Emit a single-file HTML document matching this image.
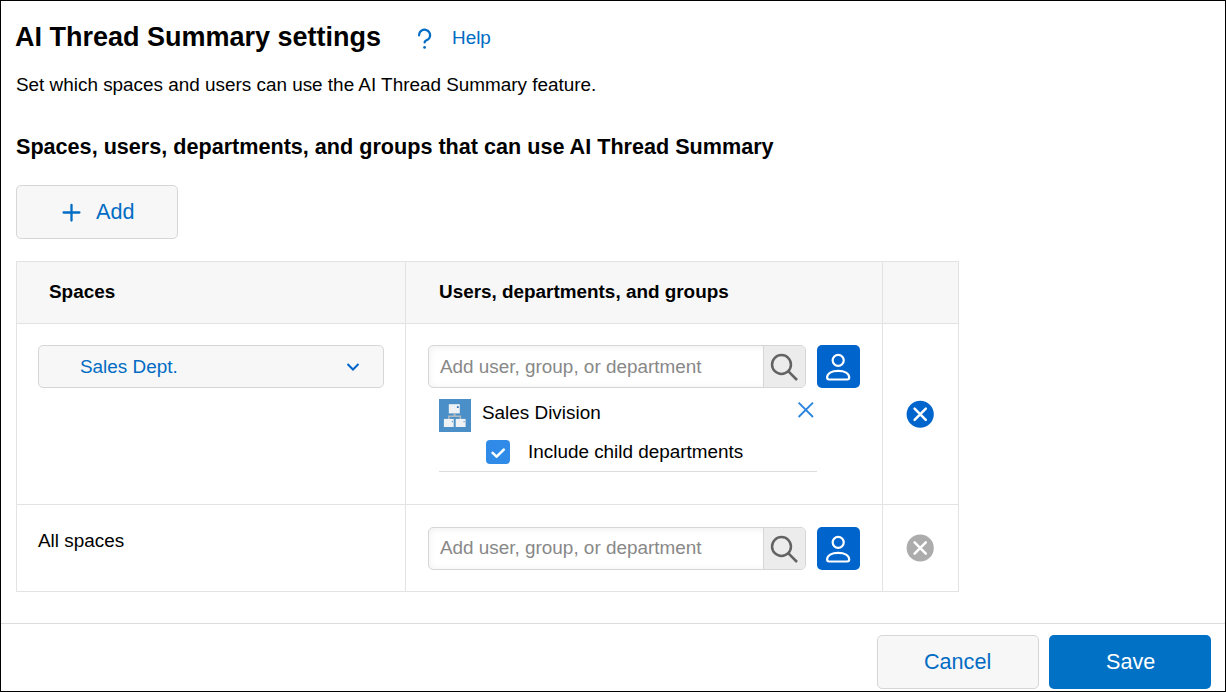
<!DOCTYPE html>
<html><head><meta charset="utf-8">
<style>
*{box-sizing:border-box;margin:0;padding:0}
html,body{width:1226px;height:692px;overflow:hidden;background:#fff}
body{font-family:"Liberation Sans",sans-serif;color:#000;position:relative}
.frame{position:absolute;left:0;top:0;width:1226px;height:692px;border:1px solid #000}
.a{position:absolute;white-space:nowrap;line-height:1}
.title{left:15px;top:24px;font-size:27px;font-weight:bold}
.help{left:452px;top:29px;font-size:18.9px;color:#006cc4}
.desc{left:16px;top:76px;font-size:18.9px;color:#000}
.sect{left:16px;top:136px;font-size:21.6px;font-weight:bold}
.btn{position:absolute;background:#f7f7f7;border:1px solid #d6d6d6;border-radius:5px}
.addbtn{left:16px;top:185px;width:162px;height:54px}
.addtxt{left:96px;top:201px;font-size:21.6px;color:#006cc4}
.table{position:absolute;left:16px;top:261px;width:943px;height:331px;border:1px solid #e3e3e3}
.hdr{position:absolute;left:0;top:0;width:941px;height:62px;background:#f7f7f7;border-bottom:1px solid #e3e3e3}
.vl{position:absolute;top:0;width:1px;height:329px;background:#e3e3e3}
.hl{position:absolute;left:0;width:941px;height:1px;background:#e3e3e3}
.th{font-size:18.9px;font-weight:bold}
.dd{position:absolute;left:38px;top:345px;width:346px;height:43px;background:#f7f7f7;border:1px solid #d6d6d6;border-radius:5px}
.blue{color:#006cc4}
.inp{position:absolute;left:428px;width:378px;height:43px;background:#fff;border:1px solid #d6d6d6;border-radius:5px;overflow:hidden;box-shadow:inset 0 1px 7px rgba(0,0,0,0.07)}
.inp .sb{position:absolute;right:0;top:0;width:42px;height:41px;background:#ececec;border-left:1px solid #d6d6d6}
.ph{font-size:18.9px;color:#888}
.ub{position:absolute;left:817px;width:43px;height:43px;background:#0064cd;border-radius:5px}
.txt{font-size:18.9px}
.footline{position:absolute;left:1px;top:623px;width:1224px;height:1px;background:#dcdcdc}
.cancel{left:877px;top:635px;width:162px;height:54px}
.save{position:absolute;left:1049px;top:635px;width:162px;height:54px;background:#0071c5;border-radius:5px}
.btxt{font-size:21.6px}
</style></head><body>
<div class="frame"></div>

<div class="a title">AI Thread Summary settings</div>
<svg class="a" style="left:410px;top:20px" width="30" height="40" viewBox="0 0 30 40"><path d="M9.1 15.4 A5.5 5.5 0 1 1 18.3 19.3 Q14.6 21 14.6 22.4" fill="none" stroke="#006cc4" stroke-width="2.2" stroke-linecap="round"/><circle cx="14.6" cy="27.4" r="1.4" fill="#006cc4"/></svg>
<div class="a help">Help</div>
<div class="a desc">Set which spaces and users can use the AI Thread Summary feature.</div>
<div class="a sect">Spaces, users, departments, and groups that can use AI Thread Summary</div>

<div class="btn addbtn"></div>
<svg class="a" style="left:62px;top:203px" width="19" height="19" viewBox="0 0 19 19"><path d="M9.5 2V17.6M1.6 9.5H17.4" stroke="#006cc4" stroke-width="2.3" stroke-linecap="round"/></svg>
<div class="a addtxt">Add</div>

<div class="table">
  <div class="hdr"></div>
  <div class="vl" style="left:388px"></div>
  <div class="vl" style="left:865px"></div>
  <div class="hl" style="top:242px"></div>
</div>
<div class="a th" style="left:49px;top:283px">Spaces</div>
<div class="a th" style="left:439px;top:283px">Users, departments, and groups</div>

<div class="dd"></div>
<div class="a txt blue" style="left:80px;top:358px">Sales Dept.</div>
<svg class="a" style="left:346px;top:362px" width="14" height="10" viewBox="0 0 14 10"><path d="M1.5 2L7 7.5L12.5 2" fill="none" stroke="#0064cc" stroke-width="2"/></svg>

<div class="inp" style="top:345px"><div class="sb"></div></div>
<div class="a ph" style="left:440px;top:358px">Add user, group, or department</div>
<svg class="a" style="left:763px;top:345px" width="43" height="43" viewBox="0 0 43 43"><circle cx="18.5" cy="19.55" r="9.45" fill="none" stroke="#636363" stroke-width="2.5"/><path d="M25.2 26.2L34 35" stroke="#636363" stroke-width="2.6"/></svg>
<div class="ub" style="top:345px"></div>
<svg class="a" style="left:817px;top:345px" width="43" height="43" viewBox="0 0 43 43"><circle cx="21.2" cy="15.35" r="5.55" fill="none" stroke="#fff" stroke-width="2.2"/><path d="M10.1 32.6 C10.1 28.3 14.8 25.8 21.2 25.8 C27.6 25.8 32.2 28.3 32.2 32.6 Q32.2 34.5 30.3 34.5 H12 Q10.1 34.5 10.1 32.6 Z" fill="none" stroke="#fff" stroke-width="2.2" stroke-linejoin="round"/></svg>

<svg class="a" style="left:439px;top:399px" width="32" height="33" viewBox="0 0 32 33"><rect width="32" height="33" fill="#4a8fc7"/><rect x="9.8" y="5.2" width="11" height="9.2" fill="#eef2f4"/><rect x="17.9" y="7.2" width="1.8" height="1.8" fill="#2f74b8"/><path d="M15.6 14.4V17.2" stroke="#b4bbbf" stroke-width="2" fill="none"/><path d="M9.9 19.9V17.2H21.4V19.9" stroke="#b4bbbf" stroke-width="1.5" fill="none"/><rect x="4.9" y="19.9" width="9.8" height="8.1" fill="#eef2f4"/><rect x="16.7" y="19.9" width="9.9" height="8.1" fill="#eef2f4"/><rect x="12.8" y="22" width="1.2" height="1.2" fill="#6b9cc9"/><rect x="24.5" y="22" width="1.2" height="1.2" fill="#6b9cc9"/></svg>
<div class="a txt" style="left:482px;top:404px">Sales Division</div>
<svg class="a" style="left:796px;top:400px" width="20" height="20" viewBox="0 0 20 20"><path d="M2.6 2.6L17 17M17 2.6L2.6 17" stroke="#2b85e0" stroke-width="1.9"/></svg>
<svg class="a" style="left:486px;top:440px" width="24" height="24" viewBox="0 0 24 24"><rect width="24" height="24" rx="4" fill="#2f8ae8"/><path d="M6.6 12.9L10.6 16.6L17.8 9.6" fill="none" stroke="#fff" stroke-width="2.6" stroke-linecap="round" stroke-linejoin="round"/></svg>
<div class="a txt" style="left:528px;top:443px">Include child departments</div>
<div class="a" style="left:439px;top:471px;width:378px;height:1px;background:#dcdcdc"></div>
<svg class="a" style="left:906px;top:400px" width="29" height="29" viewBox="0 0 29 29"><circle cx="14.2" cy="14.25" r="13.6" fill="#0064cd"/><path d="M8.6 8.6L19.8 19.8M19.8 8.6L8.6 19.8" stroke="#fff" stroke-width="2.5" stroke-linecap="round"/></svg>

<div class="a txt" style="left:38px;top:532px">All spaces</div>
<div class="inp" style="top:527px"><div class="sb"></div></div>
<div class="a ph" style="left:440px;top:539px">Add user, group, or department</div>
<svg class="a" style="left:763px;top:527px" width="43" height="43" viewBox="0 0 43 43"><circle cx="18.5" cy="19.55" r="9.45" fill="none" stroke="#636363" stroke-width="2.5"/><path d="M25.2 26.2L34 35" stroke="#636363" stroke-width="2.6"/></svg>
<div class="ub" style="top:527px"></div>
<svg class="a" style="left:817px;top:527px" width="43" height="43" viewBox="0 0 43 43"><circle cx="21.2" cy="15.35" r="5.55" fill="none" stroke="#fff" stroke-width="2.2"/><path d="M10.1 32.6 C10.1 28.3 14.8 25.8 21.2 25.8 C27.6 25.8 32.2 28.3 32.2 32.6 Q32.2 34.5 30.3 34.5 H12 Q10.1 34.5 10.1 32.6 Z" fill="none" stroke="#fff" stroke-width="2.2" stroke-linejoin="round"/></svg>
<svg class="a" style="left:906px;top:534px" width="29" height="29" viewBox="0 0 29 29"><circle cx="14.2" cy="14" r="13.6" fill="#acacac"/><path d="M8.6 8.4L19.8 19.6M19.8 8.4L8.6 19.6" stroke="#fff" stroke-width="2.5" stroke-linecap="round"/></svg>

<div class="footline"></div>
<div class="btn cancel"></div>
<div class="a btxt blue" style="left:924px;top:651px">Cancel</div>
<div class="save"></div>
<div class="a btxt" style="left:1106px;top:651px;color:#fff">Save</div>
</body></html>
